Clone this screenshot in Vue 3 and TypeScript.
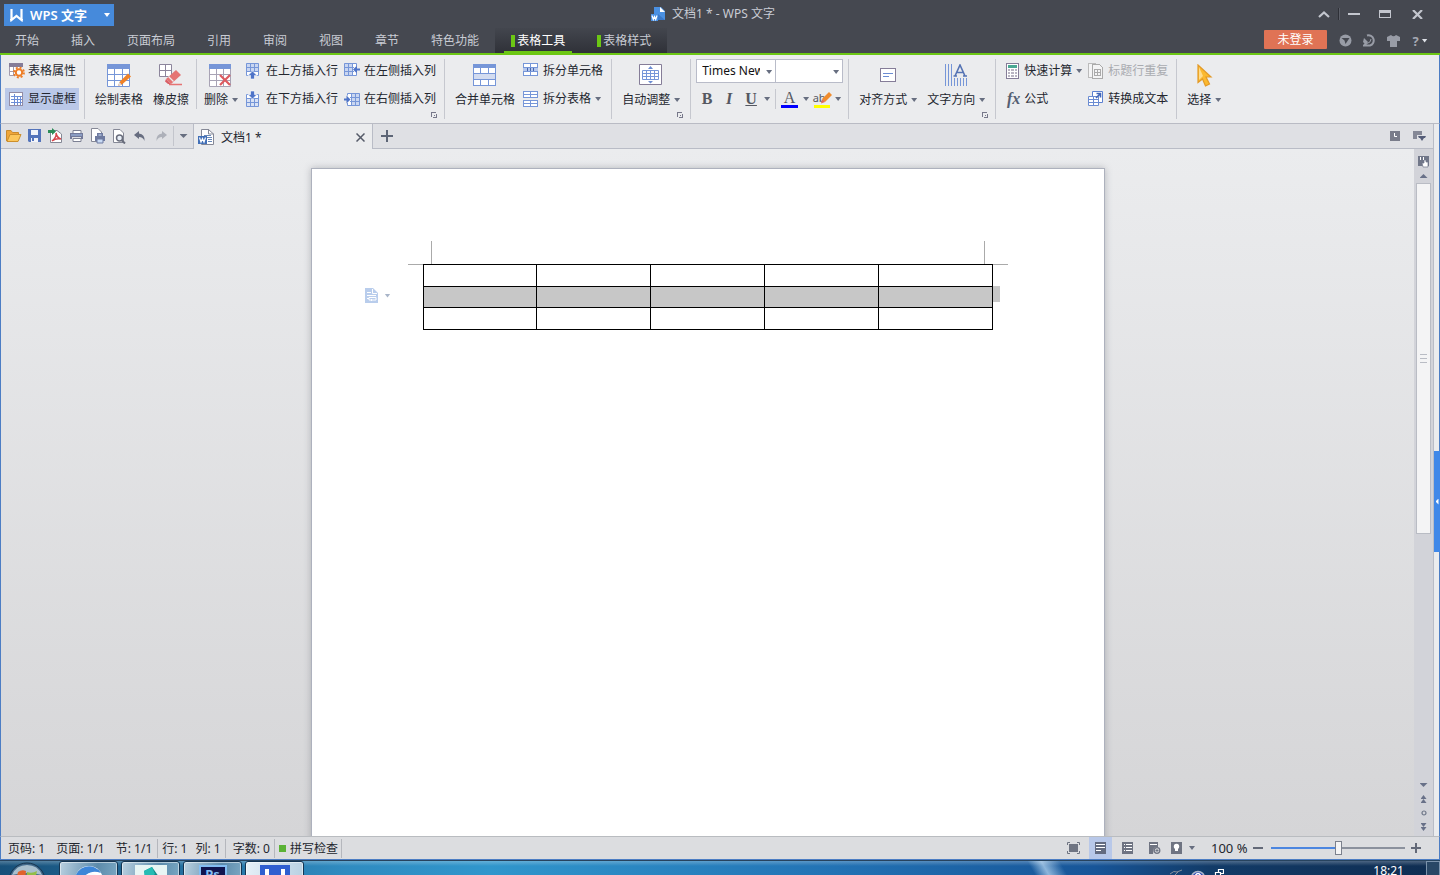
<script setup lang="ts">
import { ref } from 'vue'

const menus: string[] = ['开始', '插入', '页面布局', '引用', '审阅', '视图', '章节', '特色功能']
const contextMenus: string[] = ['表格工具', '表格样式']
const activeMenu = ref<string>('表格工具')

const fontName = ref<string>('Times New Roman')
const fontSize = ref<string>('')
const zoom = ref<number>(50)

const rows: number[] = [1, 2, 3]
const cols: number[] = [1, 2, 3, 4, 5]
const selectedRow = ref<number>(2)
</script>

<template>
  <div class="app">
    <header class="head">
      <div class="title-row">
        <div class="title-left">
          <button class="app-btn" type="button">
            <svg width="13" height="13" viewBox="0 0 13 13"><path d="M1.500 0V11L6.500 7L11.500 11V0" fill="none" stroke="#fff" stroke-width="2.200" /><path d="M0 12L2 10H0zM13 12L11 10H13z" fill="#fff" /></svg>
            <span>WPS 文字</span>
            <i class="caret light"></i>
          </button>
        </div>
        <div class="title-mid">
          <svg width="15" height="15" viewBox="0 0 15 15"><path d="M3 0H10L14 4V13H3z" fill="#4a90e2" /><path d="M9 0L14 5H9z" fill="#fff" /><path d="M7 7L14 13H7z" fill="#3a78c8" /><path d="M0 7H7V14H0z" fill="#4a90e2" /><path d="M1 8.500L2.300 12.500L3.500 9.500L4.700 12.500L6 8.500" fill="none" stroke="#fff" stroke-width="1.200" /></svg>
          <span>文档1 * - WPS 文字</span>
        </div>
        <div class="title-right">
          <button type="button" class="w28" aria-label="收起功能区"><svg width="12" height="7" viewBox="0 0 12 7"><path d="M1 6L6 1.500L11 6" fill="none" stroke="#c3c6ce" stroke-width="2.200" /></svg></button>
          <i class="win-sep"></i>
          <button type="button" class="w28" aria-label="最小化"><svg width="12" height="2" viewBox="0 0 12 2"><path d="M0 0H12V2H0z" fill="#c3c6ce" /></svg></button>
          <button type="button" class="w34" aria-label="最大化"><svg width="12" height="8" viewBox="0 0 12 8"><path d="M0 0H12V8H0zM1 3V7H11V3z" fill="#c3c6ce" fill-rule="evenodd" /></svg></button>
          <button type="button" class="w34" aria-label="关闭"><svg width="11" height="9" viewBox="0 0 11 9"><path d="M1 0L10 9M10 0L1 9" fill="none" stroke="#c3c6ce" stroke-width="2.200" /></svg></button>
        </div>
      </div>
      <nav class="menu-row">
        <button v-for="m in menus" :key="m" type="button" class="menu" @click="activeMenu = m">{{ m }}</button>
        <div class="context">
          <button v-for="m in contextMenus" :key="m" type="button" class="menu ctx" :class="{ active: activeMenu === m }" @click="activeMenu = m"><i class="mark"></i>{{ m }}</button>
        </div>
        <div class="menu-right">
          <button type="button" class="login">未登录</button>
          <button type="button" class="mini" aria-label="同步"><svg width="13" height="13" viewBox="0 0 13 13"><circle cx="6.500" cy="6.500" r="6" fill="#989ca6" /><path d="M2.500 4H10.500L6.500 10L5.500 6.500z" fill="#454850" /></svg></button>
          <button type="button" class="mini" aria-label="论坛"><svg width="13" height="13" viewBox="0 0 13 13"><path d="M4 1.500A5 5 0 1 1 7 11.500H1L3 9.500" fill="none" stroke="#989ca6" stroke-width="2" /><path d="M1 4L5 8L3 11L0 8z" fill="#989ca6" /><path d="M4 9.500Q8 8.500 8 5" fill="none" stroke="#989ca6" /></svg></button>
          <button type="button" class="mini" aria-label="皮肤"><svg width="13" height="12" viewBox="0 0 13 12"><path d="M4 0Q6.500 2.500 9 0L13 2V6H10V12H3V6H0V2z" fill="#989ca6" /></svg></button>
          <button type="button" class="help" aria-label="帮助"><b>?</b><i class="caret light"></i></button>
        </div>
      </nav>
    </header>

    <section class="ribbon">
      <div class="group g1">
        <div class="stack">
          <button type="button" class="cmd">
            <svg width="16" height="16" viewBox="0 0 16 16"><path d="M1 1H13V12H1z" fill="#fff" /><path d="M0 0H14V4H0z" fill="#857d98" /><path d="M.5 4V12.500H6M.5 8.500H6M4.500 4V12" fill="none" stroke="#a29bae" /><g fill="none" stroke="#ee7d25"><circle cx="10" cy="9.500" r="3.200" stroke-width="2" /><circle cx="10" cy="9.500" r="5" stroke-width="1.800" stroke-dasharray="2 1.930" /></g></svg>
            <span>表格属性</span>
          </button>
          <button type="button" class="cmd on">
            <svg width="16" height="16" viewBox="0 0 16 16" shape-rendering="crispEdges"><path d="M.5 1.500H13.500V14.500H.5z" fill="#fff" stroke="#938ca4" /><path d="M2 5.500H13M2 8.500H13M2 11.500H13M5.500 3V14M8.500 6V14M11.500 6V14" stroke="#6d8ed6" /></svg>
            <span>显示虚框</span>
          </button>
        </div>
      </div>

      <div class="group short g2">
        <button type="button" class="big wide">
          <svg width="24" height="24" viewBox="0 0 24 24"><path d="M.5.5H22.500V22.500H.5z" fill="#fff" stroke="#7696d8" /><path d="M0 0H23V5H0z" fill="#7696d8" /><path d="M0 10.500H22M0 16.500H22M7.500 5V22M15.500 5V22" stroke="#7696d8" /><path d="M21 9.500L24 12.500L15 20.500L11 22L12.500 18z" fill="#f08227" /><path d="M11 22L12.500 18L14.500 20.500z" fill="#d8dbe4" /></svg>
          <span>绘制表格</span>
        </button>
        <button type="button" class="big">
          <svg width="24" height="24" viewBox="0 0 24 24"><path d="M.5.5H12.500V12.500H.5zM.5 6.500H12.500M6.500 0V12" fill="#fff" stroke="#8c859c" /><path d="M17 6L22 11L12 20L7 15z" fill="#e57373" /><path d="M9.500 12.500L14.500 17.500" stroke="#ebecee" stroke-width="1.200" /><path d="M7 15L12 20H9L6 17.500z" fill="#d95f66" /><path d="M10 20.500H23" stroke="#e57373" stroke-width="1.500" /></svg>
          <span>橡皮擦</span>
        </button>
      </div>

      <div class="group g3">
        <button type="button" class="big">
          <svg width="24" height="24" viewBox="0 0 24 24"><path d="M.5.5H21.500V22.500H.5z" fill="#fff" stroke="#a8a3b5" /><path d="M0 0H22V5H0z" fill="#7696d8" /><path d="M0 10.500H22M0 16.500H22M7.500 5V22M14.500 5V22" stroke="#a8a3b5" /><path d="M11 11L21 21M21 11L11 21" stroke="#dd5a60" stroke-width="2.200" /></svg>
          <span class="drop">删除<i class="caret"></i></span>
        </button>
        <div class="stack">
          <button type="button" class="cmd">
            <svg width="15" height="18" viewBox="0 0 15 18"><path d="M.5 1.500H12.500V13.500H.5z" fill="#fff" /><path d="M0 1H13V9H0z" fill="#c9d6f1" /><path d="M4 13.500H.5V1.500H12.500V13.500H9M4.500 1V10M8.500 1V10M0 5.500H13M0 9.500H13" fill="none" stroke="#7696d8" /><path d="M6.500 9L11 13.500H8.500V17H4.500V13.500H2z" fill="#4f74c8" stroke="#fff" stroke-width=".6" /></svg>
            <span>在上方插入行</span>
          </button>
          <button type="button" class="cmd">
            <svg width="15" height="18" viewBox="0 0 15 18"><path d="M.5 4.500H12.500V16.500H.5z" fill="#fff" /><path d="M0 9H13V17H0z" fill="#d9e2f5" /><path d="M3 4.500H.5V16.500H12.500V4.500H10M4.500 8V16M8.500 8V16M0 8.500H13M0 12.500H13" fill="none" stroke="#7696d8" /><path d="M6.500 9L2 4.500H4.500V1H8.500V4.500H11z" fill="#4f74c8" stroke="#fff" stroke-width=".6" /></svg>
            <span>在下方插入行</span>
          </button>
        </div>
        <div class="stack after">
          <button type="button" class="cmd">
            <svg width="16" height="16" viewBox="0 0 16 16"><path d="M.5.5H12.500V12.500H.5z" fill="#fff" /><path d="M0 0H8V13H0z" fill="#c9d6f1" /><path d="M12.500 3V.5H.5V12.500H12.500V10M4.500 0V12M8.500 0V12M0 4.500H10M0 8.500H10" fill="none" stroke="#7696d8" /><path d="M9 6.500L13 2.500V5.500H16V7.500H13V10.500z" fill="#4f74c8" /></svg>
            <span>在左侧插入列</span>
          </button>
          <button type="button" class="cmd">
            <svg width="16" height="16" viewBox="0 0 16 16"><path d="M3.500 2.500H15.500V14.500H3.500z" fill="#fff" /><path d="M8 2H16V15H8z" fill="#c9d6f1" /><path d="M3.500 4.500V2.500H15.500V14.500H3.500V12M7.500 2V14M11.500 2V14M6 6.500H16M6 10.500H16" fill="none" stroke="#7696d8" /><path d="M6.500 8.500L2.500 4.500V7.500H0V9.500H2.500V12.500z" fill="#4f74c8" /></svg>
            <span>在右侧插入列</span>
          </button>
        </div>
        <button type="button" class="launch" aria-label="表格设置"><svg width="6" height="6" viewBox="0 0 6 6" shape-rendering="crispEdges"><path d="M.5 5V.5H5M5.500 2V5.500H2M3 3.500H4" fill="none" stroke="#77788a" /></svg></button>
      </div>

      <div class="group g4">
        <button type="button" class="big">
          <svg width="24" height="24" viewBox="0 0 24 24" shape-rendering="crispEdges"><path d="M.5.5H22.500V21.500H.5z" fill="#fff" stroke="#7696d8" /><path d="M0 0H23V4H0z" fill="#7696d8" /><path d="M1 10H22V16H1z" fill="#d3dcf0" /><path d="M0 9.500H22M0 15.500H22M7.500 4V9M15.500 4V9M7.500 16V22M15.500 16V22" stroke="#7696d8" /></svg>
          <span>合并单元格</span>
        </button>
        <div class="stack">
          <button type="button" class="cmd">
            <svg width="16" height="16" viewBox="0 0 16 16" shape-rendering="crispEdges"><path d="M.5.5H14.500V12.500H.5z" fill="#fff" stroke="#7696d8" /><path d="M0 5H15V9H0z" fill="#b4c6ec" /><path d="M0 4.500H15M0 8.500H15M7.500 0V4M7.500 9V13" stroke="#7696d8" /><path d="M4.500 5V8M7.500 5V8M10.500 5V8" stroke="#4666ae" /></svg>
            <span>拆分单元格</span>
          </button>
          <button type="button" class="cmd">
            <svg width="16" height="16" viewBox="0 0 16 16" shape-rendering="crispEdges"><path d="M.5.5H14.500V6.500H.5zM.5 9.500H14.500V15.500H.5z" fill="#fff" stroke="#7696d8" /><path d="M0 3.500H15M0 12.500H15M7.500 1V7M7.500 10V16" stroke="#7696d8" /></svg>
            <span class="drop">拆分表格<i class="caret"></i></span>
          </button>
        </div>
      </div>

      <div class="group g5">
        <button type="button" class="big">
          <svg width="24" height="24" viewBox="0 0 24 24"><path d="M.5.5H22.500V20.500H.5z" fill="#fff" stroke="#857d98" /><path d="M3.500 6.500H19.500V15.500H3.500zM3 9.500H20M3 12.500H20M7.500 6V15M11.500 6V15M15.500 6V15" fill="none" stroke="#7696d8" /><path d="M9 5L11.500 2L14 5zM9 17L11.500 19.500L14 17z" fill="#6b8cd2" /></svg>
          <span class="drop">自动调整<i class="caret"></i></span>
        </button>
        <button type="button" class="launch" aria-label="调整设置"><svg width="6" height="6" viewBox="0 0 6 6" shape-rendering="crispEdges"><path d="M.5 5V.5H5M5.500 2V5.500H2M3 3.500H4" fill="none" stroke="#77788a" /></svg></button>
      </div>

      <div class="group g6">
        <div class="combos">
          <span class="combo name"><select v-model="fontName" aria-label="字体"><option>Times New Roman</option><option>宋体</option></select><i class="caret"></i></span>
          <span class="combo size"><select v-model="fontSize" aria-label="字号"><option value=""></option><option>五号</option></select><i class="caret"></i></span>
        </div>
        <div class="format">
          <button type="button" class="fmt">B</button>
          <button type="button" class="fmt italic">I</button>
          <button type="button" class="fmt under">U</button>
          <i class="caret"></i>
          <i class="fmt-sep"></i>
          <button type="button" class="fmt color" aria-label="字体颜色"><span>A</span></button>
          <i class="caret"></i>
          <button type="button" class="fmt mark-pen" aria-label="突出显示"><span>ab</span><svg width="12" height="12" viewBox="0 0 12 12"><path d="M9 0L12 3L5 10L2 7z" fill="#f08c2e" /><path d="M2 7L5 10L1 11.500z" fill="#e06a58" /></svg></button>
          <i class="caret"></i>
        </div>
      </div>

      <div class="group g7">
        <button type="button" class="big">
          <svg width="24" height="24" viewBox="0 0 24 24" shape-rendering="crispEdges"><path d="M4.500 4.500H19.500V17.500H4.500z" fill="#fff" stroke="#857d98" /><path d="M7 9.500H17M7 12.500H13" stroke="#6b8cd2" /></svg>
          <span class="drop">对齐方式<i class="caret"></i></span>
        </button>
        <button type="button" class="big">
          <svg width="24" height="24" viewBox="0 0 24 24"><path d="M1.500 0V22M4.500 0V22M7.500 0V22M10.500 14V22M13.500 14V22M16.500 14V22M19.500 14V22M22.500 14V22" stroke="#7696d8" /><path d="M11 12L16 1L21 12M12.500 8.500H19.500M9.500 12H13M19 12H23" fill="none" stroke="#5573b4" stroke-width="1.600" /></svg>
          <span class="drop">文字方向<i class="caret"></i></span>
        </button>
        <button type="button" class="launch" aria-label="文字设置"><svg width="6" height="6" viewBox="0 0 6 6" shape-rendering="crispEdges"><path d="M.5 5V.5H5M5.500 2V5.500H2M3 3.500H4" fill="none" stroke="#77788a" /></svg></button>
      </div>

      <div class="group g8">
        <div class="stack">
          <button type="button" class="cmd">
            <svg width="15" height="16" viewBox="0 0 15 16" shape-rendering="crispEdges"><path d="M.5.5H12.500V15.500H.5z" fill="#fff" stroke="#857d98" /><path d="M2 2H11V5H2z" fill="#4aa893" /><path d="M2 6H4V8H2zM5 6H8V8H5zM9 6H11V8H9zM2 9H4V11H2zM5 9H8V11H5zM9 9H11V11H9zM2 12H4V14H2zM5 12H8V14H5zM9 12H11V14H9z" fill="#b9b5c2" /></svg>
            <span class="drop">快速计算<i class="caret"></i></span>
          </button>
          <button type="button" class="cmd"><em class="fx">fx</em><span>公式</span></button>
        </div>
        <div class="stack after">
          <button type="button" class="cmd" disabled>
            <svg width="17" height="16" viewBox="0 0 17 16" shape-rendering="crispEdges"><path d="M4 14.500H.5V.5H7.500V2" fill="#f4f4f5" stroke="#bbb" /><path d="M4.500 1.500H11.500L14.500 4.500V15.500H4.500z" fill="#f4f4f5" stroke="#aaa" /><path d="M6 6.500H13M6 9.500H13M6 12.500H13M6.500 6V13M9.500 6V13M12.500 6V13" stroke="#aaa" /></svg>
            <span>标题行重复</span>
          </button>
          <button type="button" class="cmd">
            <svg width="17" height="16" viewBox="0 0 17 16"><path d="M4.500.5H14.500V11.500H4.500z" fill="#fff" stroke="#5b80d0" /><path d="M.5 5.500H10.500V14.500H.5zM0 8.500H11M0 11.500H11M5.500 5V15" fill="#fff" stroke="#6b8cd2" /><path d="M8 7L12 3M8.500 2.500H12.500V6.500" fill="none" stroke="#4166b8" stroke-width="1.600" /></svg>
            <span>转换成文本</span>
          </button>
        </div>
      </div>

      <div class="group g9">
        <button type="button" class="big">
          <svg width="24" height="24" viewBox="0 0 24 24"><path d="M6 1L19 13H14L17.500 20L13.500 22L10.500 15L6 18.500z" fill="#fbb92f" stroke="#e39a27" stroke-width="1.200" /><path d="M7 3L11 12L7 16z" fill="#ffdc8c" /></svg>
          <span class="drop">选择<i class="caret"></i></span>
        </button>
      </div>
    </section>

    <div class="body">
      <div class="center">
        <div class="tabbar">
          <div class="quick">
            <button type="button" aria-label="打开"><svg width="16" height="14" viewBox="0 0 16 14"><path d="M.5 12V1.500H5L6.500 3.500H12.500V6" fill="#f0a63a" stroke="#c98a2c" /><path d="M1 12.500L4 5.500H15L12 12.500z" fill="#fcc75c" stroke="#cd8f2c" /></svg></button>
            <button type="button" aria-label="保存"><svg width="14" height="14" viewBox="0 0 14 14"><path d="M0 0H13V13H1L0 12z" fill="#5474bb" /><path d="M3 1H10V6H3zM3 9H10V13H3z" fill="#f2f4fa" /><path d="M4 9H6V12H4z" fill="#5474bb" /></svg></button>
            <button type="button" aria-label="输出为PDF"><svg width="15" height="16" viewBox="0 0 15 16"><path d="M2.500 2.500H9L13.500 6V14.500H2.500z" fill="#fff" stroke="#858896" /><path d="M4 13Q9 9 8 5Q9 10 13 11Q8 10 4 13" fill="none" stroke="#d8474d" stroke-width="1.500" /><path d="M0 2H4V0L8 3.500L4 7V5H0z" fill="#2d8c58" /></svg></button>
            <button type="button" aria-label="打印"><svg width="14" height="14" viewBox="0 0 14 14"><path d="M3 1.500H11V5H3zM3 9.500H11V12.500H3z" fill="#fff" stroke="#7c8093" /><path d="M0 4H13V10H11V8H2V10H0z" fill="#72799a" /><path d="M1 6H12" stroke="#a3c0ea" /></svg></button>
            <button type="button" aria-label="打印预览文档"><svg width="16" height="16" viewBox="0 0 16 16"><path d="M1.500.5H8L11.500 4V13.500H1.500z" fill="#fff" stroke="#858896" /><path d="M7 5H13V8H15V13H5V8H7z" fill="#6f7ba0" /><path d="M8 6H12V8H8zM7 11H13V15H7z" fill="#c9dbf5" stroke="#6f7ba0" /></svg></button>
            <button type="button" aria-label="打印预览"><svg width="14" height="15" viewBox="0 0 14 15"><path d="M1.500.5H8L11.500 4V13.500H1.500z" fill="#fff" stroke="#858896" /><circle cx="7.500" cy="9" r="3" fill="#e8eef7" stroke="#696d7c" stroke-width="1.500" /><path d="M9.500 11L13 14.500" stroke="#696d7c" stroke-width="2" /></svg></button>
            <button type="button" aria-label="撤销"><svg width="12" height="12" viewBox="0 0 12 12"><path d="M0 5L5 1V3.500Q11 4 10.500 11Q9 7 5 7V9z" fill="#676d80" /></svg></button>
            <button type="button" aria-label="恢复"><svg width="12" height="12" viewBox="0 0 12 12"><path d="M12 5L7 1V3.500Q1 4 1.500 11Q3 7 7 7V9z" fill="#adb0b9" /></svg></button>
            <i class="quick-sep"></i>
            <button type="button" aria-label="自定义"><i class="caret large"></i></button>
          </div>
          <div class="doc-tab">
            <svg width="17" height="17" viewBox="0 0 17 17"><path d="M3.500.5H10.500L15.500 5V15.500H3.500z" fill="#fff" stroke="#858896" /><path d="M10.500 0V5H16" fill="none" stroke="#858896" /><path d="M6 6.500H13M6 8.500H14M10 10.500H14M10 12.500H14" stroke="#6888b8" /><path d="M0 7H9V15H0z" fill="#416fb7" /><path d="M1.500 8.500L3 13L4.500 9.500L6 13L7.500 8.500" fill="none" stroke="#fff" stroke-width="1.200" /></svg>
            <span>文档1 *</span>
            <button type="button" aria-label="关闭文档"><svg width="9" height="9" viewBox="0 0 9 9"><path d="M.5.5L8.500 8.500M8.500.5L.5 8.500" stroke="#555a68" stroke-width="1.500" /></svg></button>
          </div>
          <div class="tab-rest">
            <button type="button" aria-label="新建"><svg width="12" height="12" viewBox="0 0 12 12"><path d="M5 0H7V5H12V7H7V12H5V7H0V5H5z" fill="#5d6576" /></svg></button>
            <span class="tab-tools">
              <button type="button" aria-label="历史"><svg width="10" height="10" viewBox="0 0 10 10"><path d="M0 0H10V10H0z" fill="#797c8a" /><path d="M4.500 2V5.500H7" fill="none" stroke="#fff" /></svg></button>
              <button type="button" aria-label="窗口列表"><svg width="13" height="11" viewBox="0 0 13 11"><path d="M0 0H9V4H4V8H0z" fill="#858896" /><path d="M5 5H13L12 7H11L9 10L7 7H6z" fill="#555d78" /></svg></button>
            </span>
          </div>
        </div>

        <div class="work">
          <main class="canvas">
            <div class="page">
              <div class="corners"><i class="left"></i><i class="right"></i></div>
              <div class="table-wrap">
                <table>
                  <tbody>
                    <tr v-for="r in rows" :key="r" :class="{ sel: r === selectedRow }" @click="selectedRow = r">
                      <td v-for="c in cols" :key="c"></td>
                    </tr>
                  </tbody>
                </table>
                <i class="tail"></i>
                <button type="button" class="para" aria-label="段落布局">
                  <svg width="13" height="15" viewBox="0 0 13 15"><path d="M0 0H8L13 5V15H0z" fill="#b9cdec" /><path d="M7.500 1V5.500H12M2 4.500H6M2 7.500H11M2 10.500H4V9.500H11V12H4V10.500M6.500 11V13" fill="none" stroke="#fff" /></svg>
                  <i class="caret pale"></i>
                </button>
              </div>
            </div>
          </main>
          <aside class="scroll">
            <button type="button" class="sb-tool" aria-label="标尺"><svg width="11" height="12" viewBox="0 0 11 12"><path d="M0 0H11V10H0z" fill="#717789" /><path d="M2.500 1V4M5.500 1V4" stroke="#fff" /><path d="M4 7H6V4H8V6H10V11H5z" fill="#fff" stroke="#717789" stroke-width=".7" /></svg></button>
            <button type="button" class="sb-arrow" aria-label="向上滚动"><i class="tri up"></i></button>
            <div class="track"><div class="thumb"><i></i><i></i><i></i></div></div>
            <button type="button" class="sb-arrow" aria-label="向下滚动"><i class="tri"></i></button>
            <button type="button" class="sb-arrow" aria-label="上一页"><i class="tri up"></i><i class="tri up"></i></button>
            <button type="button" class="sb-arrow ring" aria-label="选择浏览对象"><svg width="6" height="6" viewBox="0 0 6 6"><circle cx="3" cy="3" r="2" fill="none" stroke="#6e7688" stroke-width="1.200" /></svg></button>
            <button type="button" class="sb-arrow" aria-label="下一页"><i class="tri"></i><i class="tri"></i></button>
          </aside>
        </div>
      </div>
      <div class="side"><button type="button" aria-label="展开任务窗格"></button></div>
    </div>

    <footer class="status">
      <div class="cell"><span>页码: 1</span><span>页面: 1/1</span><span>节: 1/1</span></div>
      <div class="cell narrow"><span>行: 1</span><span>列: 1</span></div>
      <div class="cell count"><span>字数: 0</span></div>
      <div class="cell spell"><i></i><span>拼写检查</span></div>
      <div class="status-right">
        <button type="button" aria-label="全屏"><svg width="13" height="12" viewBox="0 0 13 12"><path d="M.5 3V.5H3M10 .5H12.500V3M12.500 9V11.500H10M3 11.500H.5V9" fill="none" stroke="#6f7482" /><path d="M2 2H11V10H2z" fill="#6f7482" /></svg></button>
        <button type="button" class="on" aria-label="页面视图"><svg width="12" height="12" viewBox="0 0 12 12"><path d="M0 0H11V12H0z" fill="#636b80" /><path d="M1 2.500H10M1 5.500H10M1 8.500H6" stroke="#fff" /></svg></button>
        <button type="button" aria-label="大纲视图"><svg width="12" height="12" viewBox="0 0 12 12"><path d="M0 0H11V12H0z" fill="#6f7482" /><path d="M2 2.500H3M4 2.500H10M2 5.500H3M4 5.500H10M2 8.500H3M4 8.500H10" stroke="#fff" /></svg></button>
        <button type="button" aria-label="Web版式"><svg width="12" height="12" viewBox="0 0 12 12"><path d="M0 0H9V5L5 6L4 12H0z" fill="#6f7482" /><path d="M1 2.500H8" stroke="#fff" /><circle cx="8" cy="8.500" r="2.800" fill="#dcdde0" stroke="#6f7482" stroke-width="1.300" /><path d="M6.500 8.500H9.500M8 7V10" stroke="#6f7482" /></svg></button>
        <button type="button" class="bulb" aria-label="护眼模式"><svg width="12" height="12" viewBox="0 0 12 12"><path d="M0 0H11V12H0z" fill="#6f7482" /><circle cx="5.500" cy="4.500" r="2.700" fill="#fff" /><path d="M4 6H7V9H4z" fill="#fff" /></svg><i class="caret"></i></button>
        <span class="pct">100 %</span>
        <button type="button" class="step" aria-label="缩小"><svg width="10" height="2" viewBox="0 0 10 2"><path d="M0 0H10V2H0z" fill="#636978" /></svg></button>
        <input v-model.number="zoom" type="range" min="0" max="100" aria-label="显示比例" />
        <button type="button" class="step" aria-label="放大"><svg width="10" height="10" viewBox="0 0 10 10"><path d="M4 0H6V4H10V6H6V10H4V6H0V4H4z" fill="#636978" /></svg></button>
      </div>
    </footer>

    <div class="taskbar">
      <button type="button" class="orb" aria-label="开始菜单"><svg width="38" height="38" viewBox="0 0 38 38"><circle cx="19" cy="19" r="18" fill="#41698b" stroke="#16344e" /><path d="M4 13Q8 3 19 3T34 13Q19 9 4 13" fill="#a9bfce" /><path d="M10 10Q14 7 18 9L17 18H8z" fill="#e0632c" /><path d="M19 10Q24 12 29 9L27 18H18z" fill="#92be47" /></svg></button>
      <button type="button" class="task" aria-label="浏览器"><svg width="30" height="30" viewBox="0 0 30 30"><circle cx="15" cy="15" r="14" fill="#fff" /><path d="M1 15A14 14 0 0 1 27 8Q15 4 10 14L8 20z" fill="#3d86d8" /><circle cx="17" cy="16" r="8" fill="#f8fbff" /></svg></button>
      <button type="button" class="task" aria-label="三维软件"><svg width="32" height="30" viewBox="0 0 32 30"><path d="M0 0H32V30H0z" fill="#e8f5f4" /><path d="M9 6L17 2L24 12L28 24H16z" fill="#118c8b" /><path d="M9 6L17 2L20 9L10 18z" fill="#25bcb4" /></svg></button>
      <button type="button" class="task" aria-label="图像软件"><b class="ps">Ps</b></button>
      <button type="button" class="task current" aria-label="WPS 文字"><svg width="30" height="30" viewBox="0 0 30 30"><path d="M0 0H30V30H0z" fill="#2f5fd0" /><path d="M7 4V18L15 13L23 18V4" fill="none" stroke="#fff" stroke-width="4" /></svg></button>
      <div class="tray">
        <svg width="54" height="16" viewBox="0 0 54 16"><path d="M0 5Q4 1 7 3L12 1M3 8L8 3" fill="none" stroke="#87909c" /><circle cx="28" cy="9" r="6.500" fill="#2745b5" stroke="#a9b6cb" stroke-width="1.500" /><path d="M25 7Q28 2 31 7" fill="none" stroke="#fff" stroke-width="1.500" /><path d="M48.500 3V.5H53.500V4.500H51M45.500 3.500H50.500V7H45.500z" fill="none" stroke="#fff" stroke-width="1.200" /></svg>
        <span class="clock">18:21</span>
        <i class="desk"></i>
      </div>
    </div>
  </div>
</template>

<style>
html,
body {
  background: #ebecee;
}
</style>

<style scoped>
.app {
  display: flex;
  flex-direction: column;
  height: 100vh;
  overflow: hidden;
  font: 12px/16px "Noto Sans", "Noto Sans CJK SC", sans-serif;
  color: #23262e;
  box-sizing: border-box;
}
.app *,
.app *::before {
  box-sizing: border-box;
}
button {
  font: inherit;
  color: inherit;
  background: none;
  border: 0;
  padding: 0;
  margin: 0;
  display: flex;
  align-items: center;
  justify-content: center;
  white-space: nowrap;
}
svg {
  display: block;
  flex: none;
}
.caret {
  flex: none;
  width: 6px;
  height: 4px;
  background: #676e80;
  clip-path: polygon(0 0, 100% 0, 50% 100%);
}
.caret.light { background: #dfe2e8; }
.caret.pale { background: #a9b5c9; }
.caret.large { width: 8px; height: 4px; }

/* title and menus */
.head {
  flex: none;
  background: #454850;
  color: #c9ccd4;
  border-bottom: 2px solid #6cc714;
}
.title-row {
  display: grid;
  grid-template-columns: 1fr auto 1fr;
  align-items: center;
  height: 28px;
  padding: 0 18px 0 4px;
}
.app-btn {
  width: 110px;
  height: 22px;
  margin-top: 2px;
  padding: 0 4px 0 6px;
  justify-content: flex-start;
  gap: 7px;
  background: #468adb;
  color: #fff;
  font-size: 13px;
  font-weight: 600;
}
.app-btn .caret { margin-left: auto; background: #fff; }
.title-mid {
  display: flex;
  align-items: center;
  gap: 6px;
}
.title-right {
  display: flex;
  align-items: center;
  justify-content: flex-end;
  height: 26px;
}
.title-right button { height: 26px; }
.w28 { width: 28px; }
.w34 { width: 33px; }
.title-right button:last-child { margin-right: -12px; }
.win-sep { width: 2px; height: 12px; background: #2e3037; border-right: 1px solid #5c5f68; }
.menu-row {
  display: flex;
  height: 25px;
}
.menu { padding: 0 16px; }
.menu:first-child { padding-left: 15px; }
.context {
  display: flex;
  background: linear-gradient(#43464e, #2f3138);
}
.menu.ctx { padding: 0 16px; gap: 2px; position: relative; }
.menu.ctx.active { color: #fff; }
.menu.ctx.active::before {
  content: "";
  position: absolute;
  left: 9px;
  right: 9px;
  bottom: 0;
  height: 2px;
  background: #6cc714;
}
.mark { width: 4px; height: 12px; background: #6cc714; }
.menu-right {
  display: flex;
  align-items: center;
  margin-left: auto;
  padding-right: 10px;
}
.login {
  width: 63px;
  height: 19px;
  margin: 0 6px 2px 0;
  background: #e07355;
  color: #fff;
  border-radius: 1px;
}
.mini { width: 24px; }
.help { width: 20px; gap: 3px; margin-left: 5px; color: #a5a9b3; font-size: 13px; }

/* ribbon */
.ribbon {
  flex: none;
  display: flex;
  align-items: flex-start;
  height: 69px;
  padding: 4px 0 0;
  background: #ebecee;
  border-bottom: 1px solid #b9bbc4;
  border-left: 1px solid #4c7dc4;
  border-right: 1px solid #4c7dc4;
}
.group {
  position: relative;
  flex: none;
  display: flex;
  align-items: flex-start;
  height: 60px;
  border-right: 1px solid #c6c8cf;
  padding-top: 1px;
}
.group.short { height: 50px; }
.stack { display: flex; flex-direction: column; align-items: flex-start; gap: 6px; }
.cmd { height: 22px; gap: 3px; padding: 0 3px; }
.cmd.on { background: #bac8e8; }
.cmd:disabled { color: #a9abb0; }
.drop { display: flex; align-items: center; gap: 4px; }
.big {
  flex-direction: column;
  justify-content: flex-start;
  height: 50px;
  padding: 4px 5px 0;
}
.big > svg { margin-bottom: 4px; }
.launch {
  position: absolute;
  right: 6px;
  bottom: 0;
  width: 8px;
  height: 8px;
}
.g1 { padding-left: 4px; padding-right: 5px; }
.g1 .cmd { padding-left: 4px; }
.g2 { padding-left: 5px; padding-right: 2px; }
.g3 { padding-left: 2px; padding-right: 8px; }
.g3 .cmd { padding-right: 0; gap: 4px; }
.g3 .stack:not(.after) .cmd { gap: 5px; }
.g3 .after { margin-left: 3px; }
.g4 { padding-left: 5px; padding-right: 5px; }
.g4 .cmd { gap: 4px; }
.g5 { padding-left: 5px; padding-right: 5px; }
.g6 { display: block; padding: 0 5px; }
.g7 { padding-left: 5px; padding-right: 5px; }
.g8 { padding-left: 7px; padding-right: 5px; }
.g9 { border-right: 0; padding-left: 5px; }
.combos { display: flex; }
.combo { position: relative; display: flex; height: 24px; }
.combo select {
  width: 100%;
  height: 24px;
  appearance: none;
  background: #fff;
  border: 1px solid #b9bcc9;
  border-radius: 0;
  padding: 0 15px 0 5px;
  font: inherit;
  color: #111;
}
.combo .caret { position: absolute; right: 4px; top: 11px; }
.combo.name { width: 80px; }
.combo.size { width: 68px; margin-left: -1px; }
.format { display: flex; align-items: center; height: 22px; margin-top: 5px; }
.fmt {
  width: 22px;
  height: 20px;
  font: bold 16px/16px "Liberation Serif", serif;
  color: #555861;
}
.italic { font-style: italic; }
.under { text-decoration: underline; }
.format .under + .caret { margin-left: 2px; }
.fmt-sep { width: 1px; height: 20px; margin: 0 5px; background: #c6c8cf; }
.fmt.color { width: 17px; margin-right: 5px; border-bottom: 3px solid #00f; height: 18px; font-weight: normal; }
.fmt.mark-pen {
  width: 16px;
  height: 18px;
  margin: 0 5px;
  border-bottom: 3px solid #ff0;
  font: 11px/14px "Noto Sans", sans-serif;
}
.mark-pen svg { margin-left: -6px; }
.fx { width: 15px; font: italic bold 16px/16px "Liberation Serif", serif; color: #555f72; }

/* document tabs */
.body {
  flex: 1;
  min-height: 0;
  display: flex;
  border-left: 1px solid #4c7dc4;
}
.center { flex: 1; min-width: 0; display: flex; flex-direction: column; border-right: 1px solid #b9bcc6; }
.tabbar { flex: none; display: flex; height: 25px; background: #dfe0e4; }
.quick {
  display: flex;
  align-items: center;
  padding-left: 2px;
  border-right: 1px solid #b9bcc6;
  border-bottom: 1px solid #b9bcc6;
}
.quick button { width: 21px; height: 24px; }
.quick-sep { width: 1px; height: 20px; background: #c3c5cc; margin-left: 2px; }
.quick button:last-child { width: 19px; }
.doc-tab {
  display: flex;
  align-items: center;
  width: 179px;
  padding: 2px 7px 0 4px;
  gap: 6px;
  background: #ebecee;
  border-right: 1px solid #b9bcc6;
}
.doc-tab button { margin-left: auto; }
.tab-rest {
  flex: 1;
  display: flex;
  align-items: center;
  justify-content: space-between;
  padding: 0 7px 0 8px;
  border-bottom: 1px solid #b9bcc6;
}
.tab-tools { display: flex; gap: 13px; }

/* editing area */
.work { flex: 1; min-height: 0; display: flex; }
.canvas {
  flex: 1;
  min-width: 0;
  overflow: hidden;
  display: flex;
  justify-content: center;
  padding-top: 19px;
  background: linear-gradient(#ebecee, #d5d5d7);
}
.page {
  flex: none;
  width: 794px;
  min-height: 1123px;
  padding: 72px 96px;
  background: #fff;
  border: 1px solid #adb1bd;
  box-shadow: 0 0 7px rgba(80, 84, 95, 0.35);
}
.corners { display: flex; justify-content: space-between; height: 24px; }
.corners i { width: 24px; border-bottom: 1px solid #aaa; }
.corners .left { border-right: 1px solid #aaa; }
.corners .right { border-left: 1px solid #aaa; }
.table-wrap { position: relative; margin: -1px 15px 0; }
table { width: 100%; border-collapse: collapse; table-layout: fixed; }
td { height: 22px; padding: 0; border: 1px solid #000; }
.sel td { height: 21px; background: #c7c7c7; }
.tail { position: absolute; left: 100%; top: 22px; width: 7px; height: 16px; background: #c7c7c7; }
.para { position: absolute; left: -58px; top: 24px; gap: 7px; }

.scroll {
  flex: none;
  width: 19px;
  display: flex;
  flex-direction: column;
  align-items: center;
  padding: 5px 0 2px;
  background: #d2d3d9;
}
.sb-tool { height: 15px; }
.sb-arrow { width: 15px; height: 14px; flex-direction: column; gap: 1px; flex: none; }
.tri { width: 8px; height: 4px; background: #687088; clip-path: polygon(0 0, 100% 0, 50% 100%); }
.tri.up { clip-path: polygon(50% 0, 100% 100%, 0 100%); }
.sb-arrow .tri:not(:only-child) { width: 6px; height: 4px; }
.sb-arrow .tri + .tri { margin-top: -1px; }
.track { flex: 1; width: 15px; }
.thumb {
  height: 59%;
  display: flex;
  flex-direction: column;
  align-items: center;
  justify-content: center;
  gap: 3px;
  background: #f4f4f5;
  border: 1px solid #b9bcc4;
}
.thumb i { width: 7px; height: 1px; background: #b9bcc4; }
.side {
  flex: none;
  width: 6px;
  display: flex;
  flex-direction: column;
  background: #ebecee;
  border-right: 1px solid #4c7dc4;
  padding-top: 327px;
}
.side button { width: 6px; height: 101px; background: #4088e8; }
.side button::before {
  content: "";
  width: 3px;
  height: 6px;
  background: #fff;
  clip-path: polygon(100% 0, 100% 100%, 0 50%);
}

/* status bar */
.status {
  flex: none;
  display: flex;
  height: 24px;
  background: #dcdde0;
  border: 1px solid #4c7dc4;
  border-top-color: #b9bcc0;
}
.cell {
  display: flex;
  align-items: center;
  gap: 11px;
  margin: 2px 0 1px;
  padding: 0 5px 0 7px;
  border-right: 1px solid #b5b7bd;
}
.cell.narrow { gap: 8px; padding: 0 4px; }
.cell.count { padding: 0 4px 0 7px; }
.cell.spell { gap: 4px; padding: 0 3px 0 4px; }
.spell i { width: 7px; height: 7px; background: #5bb236; }
.status-right { display: flex; align-items: center; margin-left: auto; padding-right: 16px; }
.status-right button { width: 23px; height: 22px; margin-right: 4px; }
.status-right .on { background: #b8c8e9; }
.status-right .bulb { width: 26px; gap: 6px; margin-right: 15px; }
.pct { width: 40px; font-size: 13px; }
.status-right .step { width: 14px; margin: 0; }
.status-right input {
  appearance: none;
  width: 134px;
  height: 14px;
  margin: 0 4px 0 6px;
  background: linear-gradient(90deg, #4c86e0 50%, #8b919d 50%) center / 100% 2px no-repeat;
}
.status-right input::-webkit-slider-thumb {
  appearance: none;
  width: 7px;
  height: 14px;
  background: #f4f4f5;
  border: 1px solid #7c818d;
}

/* system taskbar */
.taskbar {
  flex: none;
  display: flex;
  align-items: flex-start;
  height: 15px;
  overflow: hidden;
  border-top: 1px solid #27435e;
  background:
    linear-gradient(rgba(255, 255, 255, 0.25), transparent 5px),
    linear-gradient(60deg, transparent 1048px, rgba(190, 220, 245, 0.7) 1060px, transparent 1076px) -175px 0 / 1700px 100% no-repeat,
    linear-gradient(90deg, #17507a, #2f8bc0 24%, #3096cc 34%, #2272b4 58%, #175598 76%, #123b68 84%, #0f2d51);
}
.orb { width: 54px; height: 40px; align-items: flex-start; padding-top: 1px; }
.task {
  width: 59px;
  height: 40px;
  margin: 0 0 0 3px;
  padding-top: 3px;
  align-items: flex-start;
  flex: none;
  border: 1px solid #143553;
  border-radius: 3px;
  background: linear-gradient(100deg, #b9d0e0, #5c8bab 60%, #7eabc6);
  box-shadow: inset 0 0 0 1px rgba(255, 255, 255, 0.5);
}
.orb + .task { margin-left: 5px; }
.task.current { background: linear-gradient(100deg, #e7f1f8, #b5cfe1); }
.ps {
  width: 28px;
  height: 28px;
  border: 2px solid #83bdf2;
  background: #10154f;
  color: #83bdf2;
  font-size: 13px;
  line-height: 14px;
  text-align: center;
}
.tray { display: flex; align-items: flex-start; height: 40px; margin-left: auto; color: #fff; }
.tray svg { margin: 8px 149px 0 0; }
.clock { padding-top: 2px; margin-right: 22px; }
.desk { width: 14px; height: 40px; border: 1px solid #7c93ac; background: #294766; }
</style>
